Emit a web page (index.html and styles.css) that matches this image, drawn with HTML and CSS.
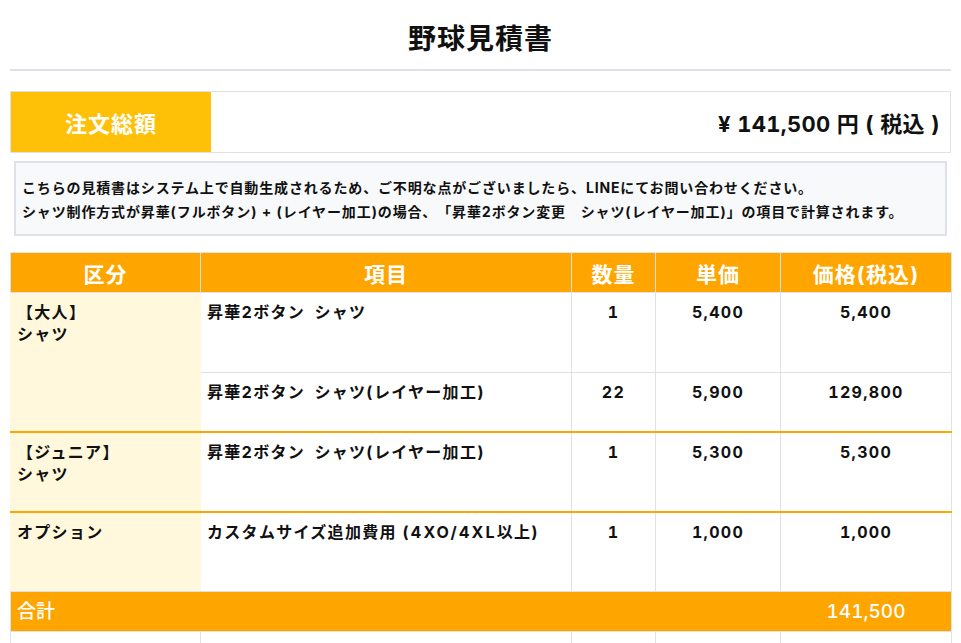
FILE: index.html
```html
<!DOCTYPE html>
<html lang="ja">
<head>
<meta charset="utf-8">
<title>野球見積書</title>
<link rel="stylesheet" href="styles.css">
</head>
<body>
<div class="page">
  <h1 class="title">野球見積書</h1>
  <div class="summary">
    <div class="summary-label">注文総額</div>
    <div class="summary-value">¥ 141,500 円 ( 税込 )</div>
  </div>
  <div class="notice">
    <p>こちらの見積書はシステム上で自動生成されるため、ご不明な点がございましたら、LINEにてお問い合わせください。</p>
    <p>シャツ制作方式が昇華(フルボタン) + (レイヤー加工)の場合、「昇華2ボタン変更　シャツ(レイヤー加工)」の項目で計算されます。</p>
  </div>
  <table class="quote">
    <colgroup>
      <col class="c-cat">
      <col class="c-item">
      <col class="c-qty">
      <col class="c-unit">
      <col class="c-price">
    </colgroup>
    <thead>
      <tr class="head">
        <th>区分</th>
        <th>項目</th>
        <th>数量</th>
        <th>単価</th>
        <th>価格(税込)</th>
      </tr>
    </thead>
    <tbody>
      <tr class="row-tall">
        <td class="cat" rowspan="2">【大人】<br>シャツ</td>
        <td>昇華2ボタン&#8194;シャツ</td>
        <td class="num">1</td>
        <td class="num">5,400</td>
        <td class="num">5,400</td>
      </tr>
      <tr class="row-short">
        <td>昇華2ボタン&#8194;シャツ(レイヤー加工)</td>
        <td class="num">22</td>
        <td class="num">5,900</td>
        <td class="num">129,800</td>
      </tr>
      <tr class="row-tall group">
        <td class="cat">【ジュニア】<br>シャツ</td>
        <td>昇華2ボタン&#8194;シャツ(レイヤー加工)</td>
        <td class="num">1</td>
        <td class="num">5,300</td>
        <td class="num">5,300</td>
      </tr>
      <tr class="row-tall group">
        <td class="cat">オプション</td>
        <td>カスタムサイズ追加費用 <span class="latin">(4XO/4XL</span>以上)</td>
        <td class="num">1</td>
        <td class="num">1,000</td>
        <td class="num">1,000</td>
      </tr>
      <tr class="total">
        <td class="total-label" colspan="4">合計</td>
        <td class="total-value">141,500</td>
      </tr>
      <tr class="row-empty">
        <td></td>
        <td></td>
        <td></td>
        <td></td>
        <td></td>
      </tr>
    </tbody>
  </table>
</div>
</body>
</html>
```

FILE: styles.css
```css
* {
  box-sizing: border-box;
}

html, body {
  margin: 0;
  padding: 0;
  background: #ffffff;
}

body {
  font-family: Inter, "Noto Sans CJK JP", sans-serif;
  color: #111111;
  letter-spacing: 1px;
  text-spacing-trim: space-all;
  font-variant-numeric: tabular-nums;
  overflow: hidden;
}

.page {
  padding: 20px 10px 0 10px;
}

.title {
  margin: 0;
  font-family: "Noto Sans CJK JP", sans-serif;
  font-size: 28px;
  line-height: 34px;
  font-weight: 700;
  text-align: center;
  padding-bottom: 15px;
  border-bottom: 2px solid #dee2e6;
}

.summary {
  display: flex;
  margin-top: 20px;
  border: 1px solid #dee2e6;
  height: 62px;
}

.summary-label {
  width: 200px;
  background: #ffc107;
  color: #ffffff;
  font-size: 22px;
  font-weight: 700;
  display: flex;
  align-items: center;
  justify-content: center;
}

.summary-value {
  flex: 1;
  display: flex;
  align-items: center;
  justify-content: flex-end;
  padding-right: 10px;
  font-size: 22px;
  font-weight: 700;
  letter-spacing: 0.3px;
}

.notice {
  margin: 8px 4px 0 4px;
  background: #f8f9fa;
  border: 2px solid #dee2e6;
  padding: 13px 6px 16px 6px;
  height: 75px;
}

.notice p {
  margin: 0;
  font-size: 14px;
  line-height: 24px;
  font-weight: 700;
  letter-spacing: 0.85px;
}

.quote {
  margin-top: 16px;
  width: 941px;
  border-collapse: collapse;
  table-layout: fixed;
}

.c-cat { width: 190px; }
.c-item { width: 371px; }
.c-qty { width: 84px; }
.c-unit { width: 125px; }
.c-price { width: 171px; }

.quote th,
.quote td {
  border: 1px solid #dee2e6;
  padding: 0;
}

.head th {
  height: 40px;
  background: #ffa500;
  color: #ffffff;
  font-size: 21px;
  font-weight: 700;
  text-align: center;
  vertical-align: middle;
}

.quote tbody td {
  vertical-align: top;
  padding: 8px 6px;
  font-size: 16px;
  line-height: 22px;
  font-weight: 700;
  letter-spacing: 1.3px;
}

.latin {
  letter-spacing: 2.2px;
}

.row-tall {
  height: 80px;
}

.row-short {
  height: 59px;
}

.group td {
  border-top: 2px solid #ffa500;
}

.quote td.cat {
  background: #fff8dc;
  border-left-color: #fff8dc;
  border-right-color: #fff8dc;
}

.num {
  text-align: center;
}

.total {
  height: 40px;
}

.quote .total td {
  background: #ffa500;
  color: #ffffff;
  font-size: 19px;
  font-weight: 500;
  letter-spacing: 0;
  vertical-align: middle;
  padding: 0 6px;
}

.quote .total td.total-label {
  border-right-color: #ffa500;
}

.quote .total td.total-value {
  border-left-color: #ffa500;
  text-align: center;
}

.row-empty {
  height: 40px;
}
```
